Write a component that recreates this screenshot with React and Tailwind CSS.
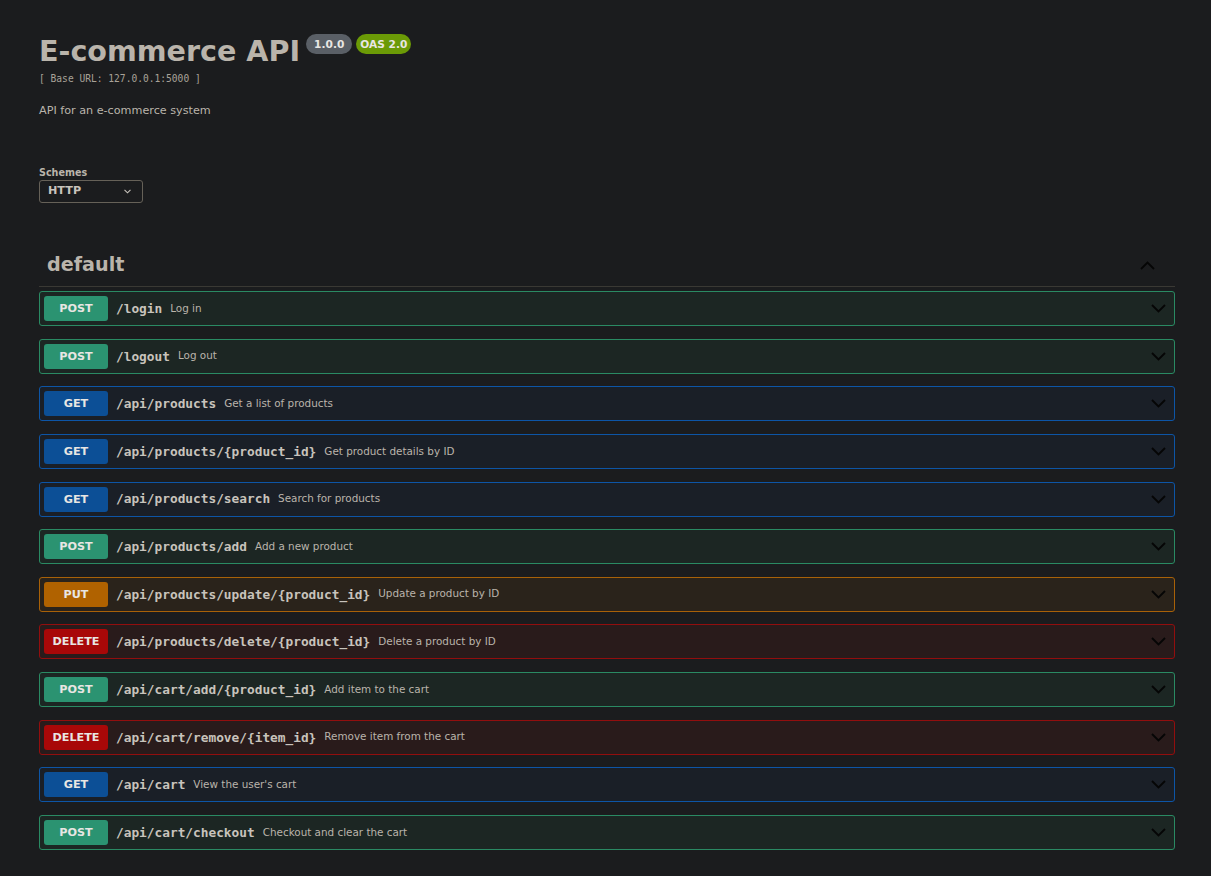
const ops = [
  { method: "POST", path: "/login", summary: "Log in" },
  { method: "POST", path: "/logout", summary: "Log out" },
  { method: "GET", path: "/api/products", summary: "Get a list of products" },
  { method: "GET", path: "/api/products/{product_id}", summary: "Get product details by ID" },
  { method: "GET", path: "/api/products/search", summary: "Search for products" },
  { method: "POST", path: "/api/products/add", summary: "Add a new product" },
  { method: "PUT", path: "/api/products/update/{product_id}", summary: "Update a product by ID" },
  { method: "DELETE", path: "/api/products/delete/{product_id}", summary: "Delete a product by ID" },
  { method: "POST", path: "/api/cart/add/{product_id}", summary: "Add item to the cart" },
  { method: "DELETE", path: "/api/cart/remove/{item_id}", summary: "Remove item from the cart" },
  { method: "GET", path: "/api/cart", summary: "View the user's cart" },
  { method: "POST", path: "/api/cart/checkout", summary: "Checkout and clear the cart" },
];

const styles = {
  POST: { row: "border-[#2a8a63] bg-[#1c2623]", badge: "bg-[#2b9371]" },
  GET: { row: "border-[#0d55a6] bg-[#1a1f27]", badge: "bg-[#0c4f96]" },
  PUT: { row: "border-[#a86108] bg-[#2a231b]", badge: "bg-[#b06200]" },
  DELETE: { row: "border-[#920e0e] bg-[#291b1b]", badge: "bg-[#a80808]" },
};

const sans = "font-['DejaVu_Sans',sans-serif]";
const mono = "font-['DejaVu_Sans_Mono',monospace]";

function Chevron({ up }) {
  return (
    <svg width="15" height="9" viewBox="0 0 15 9" fill="none" className="shrink-0">
      <path
        d={up ? "M1 8 L7.5 1.5 L14 8" : "M1 1 L7.5 7.5 L14 1"}
        stroke="#050505"
        strokeWidth="1.8"
      />
    </svg>
  );
}

function OpRow({ op }) {
  const s = styles[op.method];
  return (
    <div className={`flex h-[35px] items-center rounded-[3px] border pl-[4px] pr-[8px] ${s.row}`}>
      <span
        className={`flex h-[25px] w-[64px] shrink-0 items-center justify-center rounded-[3px] pt-[2px] text-[11.2px] font-bold text-[#e8e6e3] ${s.badge}`}
      >
        {op.method}
      </span>
      <span className={`ml-[8px] text-[12.8px] font-bold text-[#c8c3bc] ${mono}`}>{op.path}</span>
      <span className="ml-[8px] flex-1 text-[10.4px] text-[#bab4ab]">{op.summary}</span>
      <Chevron />
    </div>
  );
}

export default function App() {
  return (
    <div className={`min-h-[876px] bg-[#1b1c1e] pl-[39px] pr-[36px] ${sans}`}>
      <div className="pt-[33px]">
        <div className="flex items-start">
          <h2 className="text-[28.6px] font-bold leading-[36px] text-[#bab4ab]">E-commerce API</h2>
          <span className="ml-[6px] mt-[1px] rounded-full bg-[#5a5f66] px-[8px] text-[10.6px] font-bold leading-[20px] text-[#e8e6e3]">
            1.0.0
          </span>
          <span className="ml-[4px] mt-[1px] rounded-full bg-[#6b9a06] px-[4px] text-[10.6px] font-bold leading-[20px] text-[#e8e6e3]">
            OAS 2.0
          </span>
        </div>
        <div className={`mt-[4px] text-[9.6px] leading-[12px] text-[#a8a298] ${mono}`}>[ Base URL: 127.0.0.1:5000 ]</div>
        <p className="mt-[19px] text-[11.2px] leading-[14px] text-[#bab4ab]">API for an e-commerce system</p>
      </div>

      <div className="mt-[49px]">
        <div className="text-[9.6px] font-bold leading-[12px] text-[#bab4ab]">Schemes</div>
        <div className="mt-[1px] flex h-[23px] w-[104px] items-center justify-between rounded-[3px] border border-[#666158] pl-[8px] pr-[11px]">
          <span className="text-[11.2px] font-bold text-[#c8c3bc]">HTTP</span>
          <svg width="7" height="5" viewBox="0 0 7 5" fill="none">
            <path d="M0.5 0.8 L3.5 3.8 L6.5 0.8" stroke="#c8c3bc" strokeWidth="1.1" />
          </svg>
        </div>
      </div>

      <div className="mt-[42px]">
        <div className="flex h-[42px] items-center justify-between border-b border-[#3a3934] pl-[8px] pr-[20px]">
          <h3 className="text-[19.2px] font-bold text-[#bab4ab]">default</h3>
          <Chevron up />
        </div>
        <div className="mt-[4px] flex flex-col gap-[12.64px]">
          {ops.map((op) => (
            <OpRow key={op.path + op.method} op={op} />
          ))}
        </div>
      </div>
    </div>
  );
}
